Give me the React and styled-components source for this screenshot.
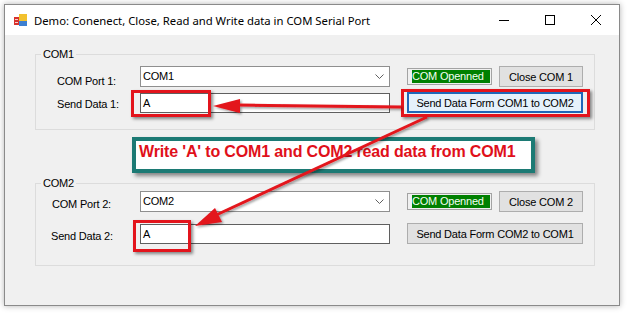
import React from 'react';
import styled, { createGlobalStyle } from 'styled-components';

const GlobalStyle = createGlobalStyle`
  html, body {
    margin: 0;
    padding: 0;
    background: #ffffff;
  }
  body {
    font-family: "Liberation Sans", Arial, sans-serif;
    font-size: 11px;
    letter-spacing: -0.2px;
    color: #000;
  }
`;

const Page = styled.div`
  position: relative;
  width: 628px;
  height: 313px;
  padding: 4px 0 0 4px;
  box-sizing: border-box;
  overflow: hidden;
`;

const Window = styled.div`
  width: 616px;
  height: 302px;
  box-sizing: border-box;
  border: 1px solid #8a8a8a;
  background: #f0f0f0;
  box-shadow: 0 0 6px rgba(0, 0, 0, 0.3);
  display: flex;
  flex-direction: column;
`;

const TitleBar = styled.div`
  height: 30px;
  flex-shrink: 0;
  background: #ffffff;
  display: flex;
  align-items: center;
  padding-left: 9px;
`;

const Title = styled.div`
  flex: 1;
  margin-left: 7px;
  font-family: "Noto Sans", "Open Sans", sans-serif;
  font-size: 11.3px;
  letter-spacing: 0;
  color: #000;
  white-space: nowrap;
`;

const CaptionButton = styled.div`
  width: 46px;
  height: 30px;
  display: flex;
  align-items: center;
  justify-content: center;
`;

const Content = styled.div`
  flex: 1;
  padding: 13px 0 0 30px;
`;

const GroupBox = styled.fieldset`
  width: 560px;
  box-sizing: border-box;
  margin: 0;
  padding: 0;
  border: 1px solid #dcdcdc;
`;

const Legend = styled.legend`
  margin-left: 5px;
  padding: 0 2px;
  font-size: 11px;
  line-height: 13px;
`;

const Rows = styled.div`
  display: flex;
  flex-direction: column;
  padding-top: ${({ $top }) => $top}px;
  padding-bottom: ${({ $bottom }) => $bottom}px;
  gap: ${({ $gap }) => $gap}px;
`;

const Row = styled.div`
  display: grid;
  grid-template-columns: 87px 250px 176px;
  column-gap: 17px;
  align-items: center;
  height: 21px;
`;

const Label = styled.div`
  align-self: start;
  padding-left: ${({ $left }) => $left}px;
  padding-top: ${({ $dy }) => $dy}px;
  line-height: 13px;
  white-space: nowrap;
`;

const Combo = styled.div`
  height: 21px;
  box-sizing: border-box;
  border: 1px solid #8f8f8f;
  background: #fff;
  display: flex;
  align-items: center;
  justify-content: space-between;
  padding: 0 5px 0 2px;
  line-height: 13px;
`;

const Field = styled.div`
  position: relative;
`;

const TextBox = styled.div`
  height: 20px;
  box-sizing: border-box;
  border: 1px solid #5f5f5f;
  background: #fff;
  display: flex;
  align-items: center;
  padding-left: 2px;
`;

const Highlight = styled.div`
  position: absolute;
  left: ${({ $l }) => $l}px;
  top: ${({ $t }) => $t}px;
  width: ${({ $w }) => $w}px;
  height: ${({ $h }) => $h}px;
  box-sizing: border-box;
  border: 3px solid #e3141c;
  box-shadow: 2px 2px 3px rgba(0, 0, 0, 0.45);
  z-index: 3;
  pointer-events: none;
`;

const Actions = styled.div`
  display: flex;
  align-items: center;
  justify-content: space-between;
`;

const Status = styled.div`
  width: 85px;
  height: 17px;
  box-sizing: border-box;
  border: 1px solid #a3a3a3;
  padding: 1px;
  background: #008000;
  background-clip: content-box;
  color: #f4fff4;
  line-height: 13px;
  padding-left: 4px;
  white-space: nowrap;
`;

const Button = styled.div`
  width: ${({ $w }) => $w}px;
  height: 21px;
  box-sizing: border-box;
  border: 1px solid ${({ $focus }) => ($focus ? '#1f67b8' : '#adadad')};
  box-shadow: ${({ $focus }) => ($focus ? 'inset 0 0 0 1px #1f67b8' : 'none')};
  background: ${({ $focus }) => ($focus ? '#e5f1fb' : '#e1e1e1')};
  display: flex;
  align-items: center;
  justify-content: center;
  white-space: nowrap;
`;

const Callout = styled.div`
  width: 403px;
  height: 36px;
  box-sizing: border-box;
  margin: 7px 0 4px 97px;
  border: 4px solid #1c7a74;
  background: #fff;
  box-shadow: 3px 3px 4px rgba(0, 0, 0, 0.45);
  padding-left: 3px;
  color: #e0101a;
  font-weight: bold;
  font-size: 16px;
  letter-spacing: -0.15px;
  line-height: 22px;
  white-space: nowrap;
`;

const Overlay = styled.svg`
  position: absolute;
  left: 0;
  top: 0;
  z-index: 5;
  pointer-events: none;
`;

const AppIcon = () => (
  <svg width="13" height="12" viewBox="0 0 13 12">
    <rect x="5" y="0" width="8" height="7" fill="#f2c12e" />
    <rect x="5" y="7" width="8" height="5" fill="#3c7fd1" />
    <rect x="0" y="3" width="5" height="8" fill="#d8322d" />
    <rect x="1" y="5" width="3" height="1" fill="#f6d0cc" />
    <rect x="1" y="8" width="3" height="1" fill="#f6d0cc" />
  </svg>
);

const Chevron = () => (
  <svg width="9" height="5" viewBox="0 0 9 5">
    <path d="M0.5 0.5 L4.5 4.5 L8.5 0.5" fill="none" stroke="#606060" strokeWidth="1" />
  </svg>
);

const Group = ({ name, port, other, first }) => (
  <GroupBox>
    <Legend>{name}</Legend>
    <Rows $top={first ? 4 : 1} $bottom={first ? 16 : 21} $gap={first ? 6 : 11}>
      <Row>
        <Label $left={first ? 21 : 16} $dy={first ? 10 : 7}>COM Port {port}:</Label>
        <Combo>
          <span>{name}</span>
          <Chevron />
        </Combo>
        <Actions>
          <Status>COM Openned</Status>
          <Button $w={84}>Close COM {port}</Button>
        </Actions>
      </Row>
      <Row>
        <Label $left={first ? 21 : 15} $dy={first ? 6 : 7}>Send Data {port}:</Label>
        <Field>
          <TextBox>A</TextBox>
          {first ? (
            <Highlight $l={-9} $t={-3} $w={80} $h={27} />
          ) : (
            <Highlight $l={-7} $t={-4} $w={58} $h={32} />
          )}
        </Field>
        <Field>
          <Button $w={176} $focus={first}>
            Send Data Form {name} to {other}
          </Button>
          {first && <Highlight $l={-6} $t={-3} $w={189} $h={28} />}
        </Field>
      </Row>
    </Rows>
  </GroupBox>
);

const Arrows = () => (
  <Overlay width="628" height="313" viewBox="0 0 628 313">
    <defs>
      <filter id="sh" x="-10%" y="-10%" width="130%" height="130%">
        <feDropShadow dx="1.5" dy="1.5" stdDeviation="1" floodColor="#000" floodOpacity="0.4" />
      </filter>
    </defs>
    <g filter="url(#sh)" fill="#e3141c" stroke="#e3141c">
      <line x1="401" y1="107" x2="236" y2="105" strokeWidth="3" />
      <polygon points="213,106 240,99 240,113" stroke="none" />
      <line x1="427" y1="117" x2="214" y2="216" strokeWidth="3" />
      <polygon points="195,226 215,208 222,222" stroke="none" />
    </g>
  </Overlay>
);

export default function App() {
  return (
    <>
      <GlobalStyle />
      <Page>
        <Window>
          <TitleBar>
            <AppIcon />
            <Title>Demo: Conenect, Close, Read and Write data in COM Serial Port</Title>
            <CaptionButton>
              <svg width="10" height="10" viewBox="0 0 10 10">
                <line x1="0" y1="5.5" x2="10" y2="5.5" stroke="#000" strokeWidth="1" />
              </svg>
            </CaptionButton>
            <CaptionButton>
              <svg width="10" height="10" viewBox="0 0 10 10">
                <rect x="0.5" y="0.5" width="9" height="9" fill="none" stroke="#000" strokeWidth="1" />
              </svg>
            </CaptionButton>
            <CaptionButton>
              <svg width="10" height="10" viewBox="0 0 10 10">
                <path d="M0 0 L10 10 M10 0 L0 10" stroke="#000" strokeWidth="1" />
              </svg>
            </CaptionButton>
          </TitleBar>
          <Content>
            <Group name="COM1" other="COM2" port={1} first />
            <Callout>Write 'A' to COM1 and COM2 read data from COM1</Callout>
            <Group name="COM2" other="COM1" port={2} />
          </Content>
        </Window>
        <Arrows />
      </Page>
    </>
  );
}
